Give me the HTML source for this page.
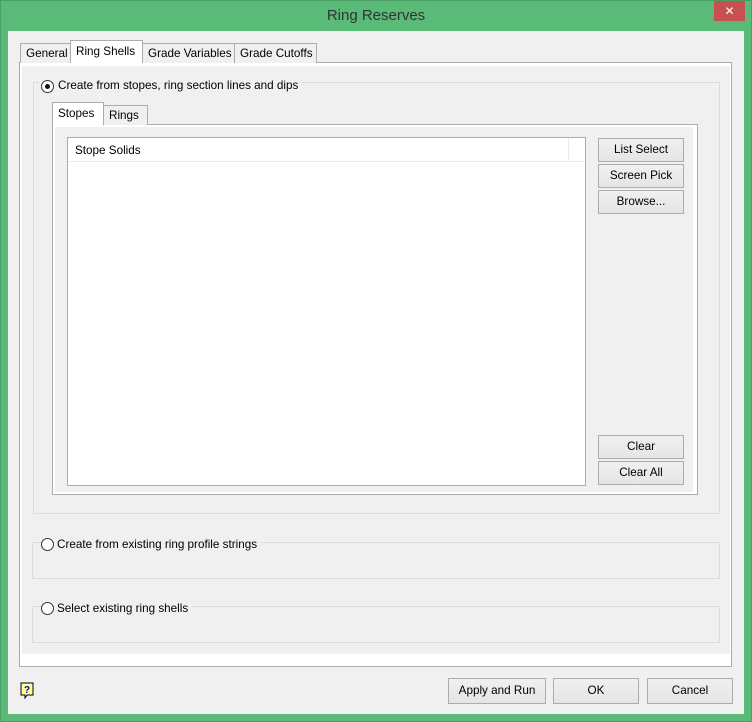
<!DOCTYPE html>
<html><head><meta charset="utf-8"><style>
*{box-sizing:border-box;margin:0;padding:0}
body{width:752px;height:722px;background:#5aba78;font-family:"Liberation Sans",sans-serif;font-size:11.7px;color:#000;position:relative;overflow:hidden;white-space:nowrap}
.a{position:absolute}
.frame{left:0;top:0;width:752px;height:722px;border:1px solid #4a9e63}
.title{left:0;top:7px;width:752px;text-align:center;font-size:15px;color:#333}
.close{left:714px;top:1px;width:31px;height:20px;background:#c75050;color:#fff;text-align:center;font-size:12px;line-height:20px}
.client{left:8px;top:31px;width:736px;height:683px;background:#f0f0f0}
.tab{border:1px solid #acacac;border-bottom:none;background:#f0f0f0;height:20px;line-height:19px;padding-left:5px}
.tab.sel{background:#fff;height:23px;line-height:21px}
.panel{border:1px solid #acacac;background:#fff}
.grey{background:#f0f0f0}
.grp{border:1px solid #dcdcdc}
.radio{width:13px;height:13px;border:1px solid #333;border-radius:50%;background:#fff}
.dot{left:3px;top:3px;width:5px;height:5px;border-radius:50%;background:#111}
.lbl{background:#f0f0f0;padding-right:4px;line-height:14px}
.btn{border:1px solid #acacac;background:linear-gradient(#f0f0f0,#e5e5e5);text-align:center;line-height:21px}
</style></head><body>
<div class="a frame"></div>
<div class="a title">Ring Reserves</div>
<div class="a close">✕</div>
<div class="a client"></div>

<div class="a panel" style="left:19px;top:62px;width:713px;height:605px"></div>
<div class="a grey" style="left:22px;top:66px;width:708px;height:588px"></div>
<div class="a tab" style="left:20px;top:43px;width:51px">General</div>
<div class="a tab" style="left:142px;top:43px;width:93px">Grade Variables</div>
<div class="a tab" style="left:234px;top:43px;width:83px">Grade Cutoffs</div>
<div class="a tab sel" style="left:70px;top:40px;width:73px">Ring Shells</div>

<div class="a grp" style="left:33px;top:82px;width:687px;height:432px"></div>
<div class="a lbl" style="left:40px;top:79px;padding-left:1px">&nbsp;</div>
<div class="a radio" style="left:41px;top:80px"><div class="a dot"></div></div>
<div class="a lbl" style="left:54px;top:79px;padding-left:4px">Create from stopes, ring section lines and dips</div>

<div class="a panel" style="left:52px;top:124px;width:646px;height:371px"></div>
<div class="a grey" style="left:55px;top:127px;width:638px;height:365px"></div>
<div class="a tab" style="left:103px;top:105px;width:45px">Rings</div>
<div class="a tab sel" style="left:52px;top:102px;width:52px">Stopes</div>

<div class="a" style="left:67px;top:137px;width:519px;height:349px;border:1px solid #acacac;background:#fff"></div>
<div class="a" style="left:68px;top:138px;width:517px;height:24px;border-bottom:1px solid #e3edf7"></div>
<div class="a" style="left:568px;top:138px;width:1px;height:24px;background:#e3edf7"></div>
<div class="a" style="left:75px;top:144px">Stope Solids</div>

<div class="a btn" style="left:598px;top:138px;width:86px;height:24px">List Select</div>
<div class="a btn" style="left:598px;top:164px;width:86px;height:24px">Screen Pick</div>
<div class="a btn" style="left:598px;top:190px;width:86px;height:24px">Browse...</div>
<div class="a btn" style="left:598px;top:435px;width:86px;height:24px">Clear</div>
<div class="a btn" style="left:598px;top:461px;width:86px;height:24px">Clear All</div>

<div class="a grp" style="left:32px;top:542px;width:688px;height:37px"></div>
<div class="a radio" style="left:41px;top:538px"></div>
<div class="a lbl" style="left:54px;top:538px;padding-left:3px">Create from existing ring profile strings</div>
<div class="a grp" style="left:32px;top:606px;width:688px;height:37px"></div>
<div class="a radio" style="left:41px;top:602px"></div>
<div class="a lbl" style="left:54px;top:602px;padding-left:3px">Select existing ring shells</div>

<svg class="a" style="left:20px;top:682px" width="16" height="17" viewBox="0 0 16 17"><path d="M1 1h12v12H7l-2 3v-3H1z" fill="#ffffa0" stroke="#000"/><text x="7" y="11" font-size="10" font-family="Liberation Sans" font-weight="bold" text-anchor="middle" fill="#00008b">?</text></svg>

<div class="a btn" style="left:448px;top:678px;width:98px;height:26px;line-height:24px">Apply and Run</div>
<div class="a btn" style="left:553px;top:678px;width:86px;height:26px;line-height:24px">OK</div>
<div class="a btn" style="left:647px;top:678px;width:86px;height:26px;line-height:24px">Cancel</div>
</body></html>
